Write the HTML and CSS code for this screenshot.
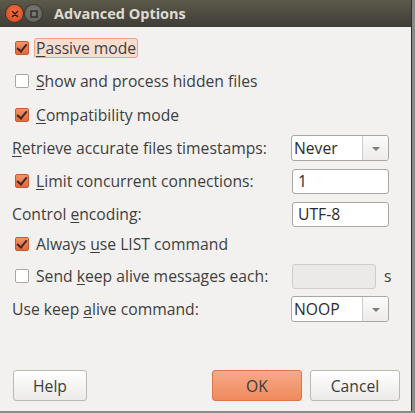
FILE: index.html
```html
<!DOCTYPE html>
<html>
<head>
<meta charset="utf-8">
<link rel="stylesheet" href="styles.css">
</head>
<body>
<div class="window">
  <div class="titlebar">
    <span class="wbtn close"><svg width="10" height="10" viewBox="0 0 10 10"><path d="M2.5 2.5 L7.5 7.5 M7.5 2.5 L2.5 7.5" stroke="#3a1a10" stroke-width="1.6" stroke-linecap="round"/></svg></span>
    <span class="wbtn max"><svg width="10" height="10" viewBox="0 0 10 10"><rect x="2" y="2" width="6" height="6" fill="none" stroke="#2e2d29" stroke-width="1.4"/></svg></span>
    <span class="title">Advanced Options</span>
  </div>
  <div class="content">
    <div class="rows">
      <div class="row">
        <span class="check on"></span><span class="label focus"><u>P</u>assive mode</span>
      </div>
      <div class="row">
        <span class="check"></span><span class="label"><u>S</u>how and process hidden files</span>
      </div>
      <div class="row r3">
        <span class="check on"></span><span class="label"><u>C</u>ompatibility mode</span>
      </div>
      <div class="row field">
        <span class="plain"><u>R</u>etrieve accurate files timestamps:</span>
        <span class="combo"><span class="val">Never</span><span class="arrow"></span></span>
      </div>
      <div class="row field">
        <span class="check on"></span><span class="label"><u>L</u>imit concurrent connections:</span>
        <span class="entry">1</span>
      </div>
      <div class="row field">
        <span class="plain">Control <u>e</u>ncoding:</span>
        <span class="entry">UTF-8</span>
      </div>
      <div class="row r7">
        <span class="check on"></span><span class="label">Always <u>u</u>se LIST command</span>
      </div>
      <div class="row field r8">
        <span class="check"></span><span class="label">Send <u>k</u>eep alive messages each:</span>
        <span class="entry disabled"></span><span class="unit">s</span>
      </div>
      <div class="row field">
        <span class="plain">Use keep <u>a</u>live command:</span>
        <span class="combo"><span class="val">NOOP</span><span class="arrow"></span></span>
      </div>
    </div>
    <div class="buttons">
      <span class="btn help">Help</span>
      <span class="spacer"></span>
      <span class="btn ok">OK</span>
      <span class="btn cancel">Cancel</span>
    </div>
  </div>
</div>
</body>
</html>
```
FILE: styles.css
```css
html, body {
  margin: 0;
  padding: 0;
}
body {
  background: #8b8a86;
  width: 415px;
  height: 413px;
  overflow: hidden;
  font-family: "Open Sans", "DejaVu Sans", sans-serif;
  font-size: 15.7px;
  color: #3e3e3e;
}
.window {
  width: 412px;
  height: 411px;
  background: #f2f1f0;
  border-right: 1px solid #2f2f2c;
  box-sizing: border-box;
  display: flex;
  flex-direction: column;
}
.titlebar {
  height: 27px;
  flex: none;
  background: linear-gradient(#5b5949, #3f3d37);
  display: flex;
  align-items: center;
  padding-left: 6px;
}
.wbtn {
  width: 17px;
  height: 17px;
  border-radius: 50%;
  display: flex;
  align-items: center;
  justify-content: center;
  margin-right: 2px;
}
.wbtn.close {
  background: radial-gradient(circle at 50% 40%, #f26d3f, #d9491d);
  box-shadow: 0 0 0 1px #3a3830;
}
.wbtn.max {
  background: radial-gradient(circle at 50% 40%, #7c7b75, #5b5a55);
  box-shadow: 0 0 0 1px #3a3830;
}
.title {
  margin-left: 10px;
  font-weight: bold;
  font-size: 14.5px;
  color: #dfdbd2;
}
.content {
  flex: 1;
  display: flex;
  flex-direction: column;
  padding: 8px 22px 10px 12px;
}
.rows {
  display: flex;
  flex-direction: column;
  gap: 7px;
}
.row {
  height: 26px;
  display: flex;
  align-items: center;
  padding-left: 3px;
}
.row.field {
  padding-left: 0;
}
.row.field .check {
  margin-left: 3px;
}
.r3 { margin-top: 1px; }
.r7 { margin-top: -3px; }
.r8 { margin-top: -1px; }
.check {
  width: 14px;
  height: 14px;
  box-sizing: border-box;
  border: 1px solid #a9a7a2;
  border-radius: 2px;
  background: #fff;
  flex: none;
  position: relative;
}
.check.on {
  background: linear-gradient(#f39468, #e2683a);
  border-color: #c65a2e;
}
.check.on::after {
  content: "";
  position: absolute;
  left: 3px;
  top: 0px;
  width: 4px;
  height: 8px;
  border-right: 2px solid #3a2a24;
  border-bottom: 2px solid #3a2a24;
  transform: rotate(40deg);
}
.label {
  padding: 0 1px;
  line-height: 18px;
  border: 1px solid transparent;
  border-radius: 3px;
  margin-left: 5px;
}
.label.focus {
  background: #f7ddd0;
  border-color: #efa384;
}
.plain {
  line-height: 18px;
}
u {
  text-decoration-thickness: 1px;
  text-underline-offset: 2px;
}
.field .combo, .field .entry {
  margin-left: auto;
}
.entry {
  width: 97px;
  height: 25px;
  box-sizing: border-box;
  border: 1px solid #a9a7a2;
  border-radius: 3px;
  background: #fff;
  padding-left: 5px;
  display: flex;
  align-items: center;
  color: #2b2b2b;
}
.entry.disabled {
  width: 84px;
  background: #ebeae9;
  border-color: #cfcdca;
  margin-right: 8px;
}
.unit {
  width: 5px;
}
.combo {
  width: 98px;
  height: 26px;
  box-sizing: border-box;
  border: 1px solid #aaa8a3;
  border-radius: 3px;
  background: #fff;
  display: flex;
  align-items: stretch;
  color: #2b2b2b;
}
.combo .val {
  flex: 1;
  display: flex;
  align-items: center;
  padding-left: 2px;
  border-right: 1px solid #cfcdc9;
}
.combo .arrow {
  width: 25px;
  background: linear-gradient(#fbfbfb, #ecebea);
  border-radius: 0 2px 2px 0;
  position: relative;
}
.combo .arrow::after {
  content: "";
  position: absolute;
  left: 9px;
  top: 11px;
  border-left: 4px solid transparent;
  border-right: 4px solid transparent;
  border-top: 4px solid #7d7c78;
}
.buttons {
  margin-top: auto;
  display: flex;
  align-items: center;
  padding-left: 1px;
  margin-right: -11px;
}
.spacer { flex: 1; }
.btn {
  height: 31px;
  box-sizing: border-box;
  border: 1px solid #bcb9b3;
  border-radius: 3px;
  background: linear-gradient(#ffffff, #ebeae8);
  display: flex;
  align-items: center;
  justify-content: center;
  color: #3c3c3c;
}
.btn.help { width: 74px; }
.btn.ok {
  width: 90px;
  background: linear-gradient(#f7a987, #ef8a5d);
  border-color: #d9774b;
  margin-right: 8px;
}
.btn.cancel { width: 90px; }
```
